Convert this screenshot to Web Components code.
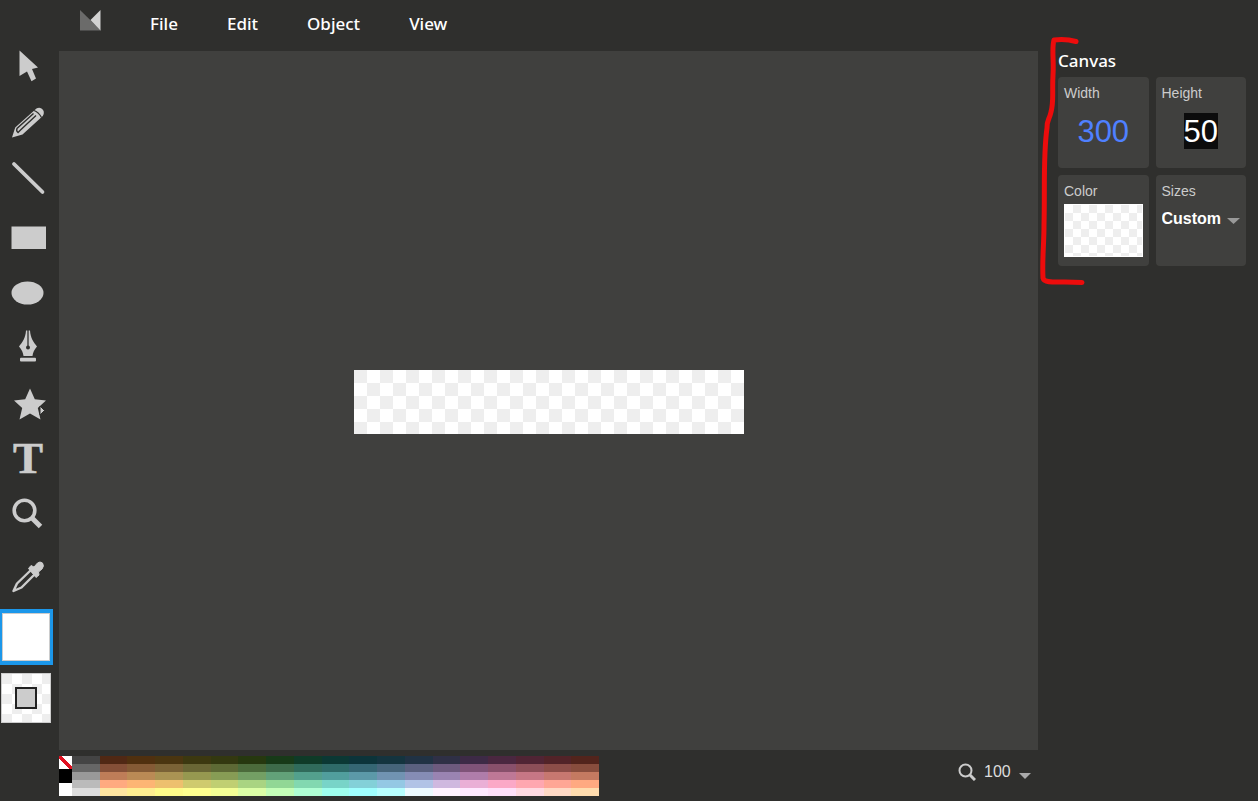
<!DOCTYPE html>
<html lang="en">
<head>
  <meta charset="UTF-8">
  <meta name="viewport" content="width=device-width, initial-scale=1.0">
  <title>Vector editor</title>
  <style>
    body {
      margin: 0;
      background: #2f2f2d;
      color: #fff;
      font-family: "Liberation Sans", Arial, sans-serif;
      font-size: 14px;
      --icon: #ccc;
      --surface: #40403e;
      --ui-font: "Noto Sans", sans-serif;
    }
  </style>
</head>
<body>
  <vector-editor>
    <menu-bar slot="menu"></menu-bar>
    <tool-bar slot="tools"></tool-bar>
    <art-stage slot="stage"></art-stage>
    <canvas-panel slot="panel"></canvas-panel>
    <color-palette slot="palette"></color-palette>
    <zoom-picker slot="zoom"></zoom-picker>
  </vector-editor>

<script type="text/javascript">
// Small helper: every element below fills an open shadow root with its markup.
class BaseElement extends HTMLElement {
  constructor() {
    super();
    this.attachShadow({mode: 'open'}).innerHTML = this.render();
  }
}

customElements.define('vector-editor', class extends BaseElement {
  render() {
    return `
      <style>
        :host {
          display: grid;
          grid-template-columns: 59px 1fr 220px;
          grid-template-rows: 51px 1fr 51px;
          min-height: 100vh;
        }
        .tools { grid-area: 1 / 1 / 4 / 2; }
        .menu { grid-area: 1 / 2 / 2 / 4; }
        .stage { grid-area: 2 / 2 / 3 / 3; display: grid; }
        .panel { grid-area: 2 / 3 / 4 / 4; }
        .footer {
          grid-area: 3 / 2 / 4 / 3;
          display: flex;
          justify-content: space-between;
          align-items: flex-start;
        }
      </style>
      <header class="menu"><slot name="menu"></slot></header>
      <aside class="tools"><slot name="tools"></slot></aside>
      <main class="stage"><slot name="stage"></slot></main>
      <aside class="panel"><slot name="panel"></slot></aside>
      <footer class="footer"><slot name="palette"></slot><slot name="zoom"></slot></footer>
    `;
  }
});

customElements.define('menu-bar', class extends BaseElement {
  render() {
    return `
      <style>
        :host { display: block; }
        nav {
          display: flex;
          align-items: flex-start;
          gap: 49px;
          padding: 10px 21px;
        }
        button {
          border: 0;
          padding: 0;
          background: none;
          color: #fff;
          font: 500 17px/28px var(--ui-font);
        }
      </style>
      <nav>
        <svg width="21" height="21" viewBox="0 0 21 21" aria-hidden="true">
          <path d="M0 0L21 20.5H0Z" fill="#6b6b6a"/>
          <path d="M20.5 0V20.5L10.5 10Z" fill="#d2d2d2"/>
        </svg>
        ${['File', 'Edit', 'Object', 'View'].map(name => `<button type="button">${name}</button>`).join('')}
      </nav>
    `;
  }
});

customElements.define('tool-button', class extends BaseElement {
  render() {
    return `
      <style>
        :host { display: block; }
        button {
          display: block;
          border: 0;
          padding: 0;
          background: none;
          color: var(--icon);
        }
      </style>
      <button type="button" aria-label="${this.getAttribute('label')}"><slot></slot></button>
    `;
  }
});

const TOOLS = {
  Select: '<path d="M19.5 12.5V38L27 33.5L31.5 43.2L36 40.6L32 31L38 29.5Z" fill="currentColor"/>',
  Pencil: `
    <path d="M12 43.5L15.2 33.5L34.5 16.3Q38 12.5 41.500 14.500Q45.500 17 42.800 22L22.500 40.500Z" fill="currentColor"/>
    <path d="M33.500 19.500L17 34.500Q16 37 18 38.500L20.500 36L36 21.500" fill="none" stroke="#2f2f2d" stroke-width="1.400"/>
    <path d="M34 16.500Q38.500 18 41.500 23.500" fill="none" stroke="#2f2f2d" stroke-width="1.200"/>`,
  Line: '<path d="M14 14L42.5 42" stroke="currentColor" stroke-width="3.8" stroke-linecap="round"/>',
  Rectangle: '<path d="M11.5 20.5H46V43H11.5Z" fill="currentColor"/>',
  Ellipse: '<ellipse cx="27.5" cy="31" rx="16" ry="11.5" fill="currentColor"/>',
  Pen: `
    <path d="M26 12.5H30C30.5 20 33.5 24 37 28.5C34 32 33 34.5 32.5 38H23.5C23 34.5 22 32 19 28.5C22.5 24 25.5 20 26 12.5Z" fill="currentColor"/>
    <path d="M28 12V28" stroke="#2f2f2d" stroke-width="1.3"/>
    <circle cx="28" cy="29.5" r="2" fill="#2f2f2d"/>
    <rect x="20" y="39.7" width="16" height="3.8" rx="1" fill="currentColor"/>`,
  Star: `
    <path d="M30 14.5L34.8 25.3L46 26.5L37.8 34L40.5 45.5L30 39.5L19.5 45.5L22.2 34L14 26.5L25.2 25.3Z" fill="currentColor"/>
    <path d="M40 32L44.5 36.5L40 41Z" fill="currentColor" stroke="#2f2f2d" stroke-width="1"/>`,
  Text: '<text x="28" y="43" text-anchor="middle" font-family="Liberation Serif, serif" font-weight="700" font-size="45" fill="currentColor" stroke="currentColor" stroke-width="0.6">T</text>',
  Zoom: `
    <circle cx="24.5" cy="24.5" r="10.3" fill="none" stroke="currentColor" stroke-width="3.6"/>
    <path d="M31.5 31.5L40.5 40.5" stroke="currentColor" stroke-width="5"/>`,
  Eyedropper: `
    <path d="M13.5 49L17 41.5L31 28L35 32L21.5 45.5Z" fill="none" stroke="currentColor" stroke-width="2.4" stroke-linejoin="round"/>
    <path d="M28.5 26.5L31 23.5L34 25L37.5 21Q40 19 42.5 21Q44.5 24 42 27L38.5 30L39 33L36 35.5Z" fill="currentColor" stroke="currentColor" stroke-width="1" stroke-linejoin="round"/>`
};

customElements.define('tool-bar', class extends BaseElement {
  render() {
    const tools = Object.entries(TOOLS).map(([label, shape]) => `
      <tool-button label="${label}"><svg width="56" height="56" viewBox="0 0 56 56" aria-hidden="true">${shape}</svg></tool-button>`);
    return `
      <style>
        :host { display: block; padding-top: 38px; }
        svg { display: block; }
        .swatches {
          display: flex;
          flex-direction: column;
          align-items: flex-start;
          gap: 8px;
          padding-top: 11px;
        }
        .swatches button { padding: 0; }
        .fill {
          width: 53px;
          height: 56px;
          border: solid #1c97ea;
          border-width: 4px 3px 4px 2px;
          background: #fff;
          box-shadow: inset 0 0 0 1px #ccc;
        }
        .outline {
          display: grid;
          place-items: center;
          width: 50px;
          height: 50px;
          margin-left: 1px;
          border: 1px solid #ccc;
          background: repeating-conic-gradient(#fff 0 25%, #eee 0 50%) 0 0 / 20px 20px;
        }
        .outline span {
          width: 18px;
          height: 18px;
          border: 2px solid #222;
          background: #ccc;
        }
      </style>
      ${tools.join('')}
      <div class="swatches">
        <button type="button" class="fill" aria-label="Fill color"></button>
        <button type="button" class="outline" aria-label="Stroke color"><span></span></button>
      </div>
    `;
  }
});

customElements.define('art-stage', class extends BaseElement {
  render() {
    return `
      <style>
        :host {
          display: grid;
          place-items: center;
          padding-top: 2px;
          background: var(--surface);
        }
        div {
          width: 390px;
          height: 64px;
          background: repeating-conic-gradient(#fff 0 25%, #eee 0 50%) 0 0 / 26px 26px;
        }
      </style>
      <div></div>
    `;
  }
});

// Card with a caption on top and any control in its slot
customElements.define('property-card', class extends BaseElement {
  render() {
    return `
      <style>
        :host {
          display: flex;
          flex-direction: column;
          box-sizing: border-box;
          height: 91px;
          padding: 6px;
          border-radius: 4px;
          background: var(--surface);
          color: #ccc;
        }
      </style>
      <slot></slot>
    `;
  }
});

customElements.define('canvas-panel', class extends BaseElement {
  render() {
    return `
      <style>
        :host { display: block; position: relative; padding: 0 12px 0 20px; }
        h2 { margin: 0; font: 500 17px/20px var(--ui-font); }
        .cards {
          display: grid;
          grid-template-columns: 1fr 1fr;
          gap: 7px;
          padding-top: 6px;
        }
        label { font-size: 14px; line-height: 20px; }
        input {
          align-self: center;
          width: 3ch;
          height: 36px;
          margin-top: 10px;
          border: 0;
          padding: 1px 0 0;
          box-sizing: border-box;
          background: none;
          color: #4f80ff;
          font: 31px "Liberation Sans", Arial, sans-serif;
        }
        input.selected {
          width: 2ch;
          background: #0c0c0c;
          color: #fff;
        }
        .color {
          height: 53px;
          margin-top: 3px;
          border: 1px solid #fff;
          padding: 0;
          background: repeating-conic-gradient(#eee 0 25%, #fff 0 50%) 0 0 / 16px 16px;
        }
        .sizes {
          display: flex;
          align-items: center;
          justify-content: space-between;
          padding-top: 8px;
        }
        .sizes svg { margin-top: 3px; }
        select {
          appearance: none;
          border: 0;
          padding: 0;
          background: none;
          color: #fff;
          font: 700 16px/20px "Liberation Sans", Arial, sans-serif;
        }
        .mark {
          position: absolute;
          top: -16px;
          left: 0;
          overflow: visible;
          pointer-events: none;
        }
      </style>
      <h2>Canvas</h2>
      <div class="cards">
        <property-card>
          <label for="width">Width</label>
          <input id="width" value="300" inputmode="numeric">
        </property-card>
        <property-card>
          <label for="height">Height</label>
          <input id="height" class="selected" value="50" inputmode="numeric">
        </property-card>
        <property-card>
          <label for="color">Color</label>
          <button id="color" class="color" type="button"></button>
        </property-card>
        <property-card>
          <label for="sizes">Sizes</label>
          <div class="sizes">
            <select id="sizes"><option>Custom</option></select>
            <svg width="13" height="7" viewBox="0 0 13 7" aria-hidden="true"><path d="M0 1H13L6.5 7Z" fill="#999"/></svg>
          </div>
        </property-card>
      </div>
      <svg class="mark" width="50" height="255" viewBox="0 0 50 255" aria-hidden="true">
        <path d="M38 6.5C31 4.5 24 4 16 5C13.5 13 16 25 15 40C14 58 16 66 13 77C11 86 9 84 9 93C5 121 7 151 6 190C6 210 4 225 5 243C6 248 17 247 27 247L44 247.5"
          fill="none" stroke="#ed0c0c" stroke-width="5" stroke-linecap="round" stroke-linejoin="round"/>
      </svg>
    `;
  }
});

// One row of the strip per shade, from dark to light
const SHADES = [
  ['#444', '#502814', '#50300f', '#4a3510', '#3c3810', '#333810', '#26380f', '#173a18', '#0f3b28', '#0b3834', '#0c343a', '#14343f', '#203244', '#2f3046', '#3d2a46', '#4a2740', '#502434', '#522328', '#52241c'],
  ['#666', '#844f37', '#845a35', '#7a6236', '#696635', '#5d6935', '#4b6b3b', '#3d6b4a', '#306b5b', '#2e6a68', '#356673', '#46647a', '#5a607f', '#6d5a7e', '#7f5378', '#88506b', '#8c4e58', '#8c4d48', '#884d3d'],
  ['#999', '#be7d58', '#ba8a55', '#aa9353', '#969850', '#879c55', '#739f64', '#62a179', '#53a08d', '#519e9d', '#5c99a8', '#7193b2', '#858cb5', '#9a84b2', '#af7daa', '#be7896', '#c67785', '#c77870', '#c47a61'],
  ['#bbb', '#ffaa80', '#fdb574', '#edc06e', '#cfca6e', '#c0cf72', '#a9d482', '#91d795', '#82d8b0', '#78d4c8', '#83d0d8', '#94c8e4', '#b1c3e6', '#cfb8df', '#eaafd6', '#fba8c7', '#ffa7b0', '#ffa695', '#ffa981'],
  ['#ddd', '#ffe5a0', '#ffee91', '#fffb8a', '#ffff90', '#f4ff96', '#dcffa7', '#c4ffb8', '#b0ffd4', '#9fffee', '#a0ffff', '#b8ffff', '#edfaff', '#fff3ff', '#ffe9ff', '#ffe0fa', '#ffdae2', '#ffd9c5', '#ffdcae']
];

customElements.define('color-palette', class extends BaseElement {
  render() {
    const swatches = SHADES.flat().map(color => `<button type="button" aria-label="${color}" style="background: ${color}"></button>`);
    return `
      <style>
        :host {
          display: flex;
          flex: 0 1 540px;
          height: 40px;
          padding-top: 6px;
        }
        button { display: block; border: 0; padding: 0; }
        .basic {
          display: grid;
          grid-template-rows: repeat(3, 1fr);
          width: 13px;
        }
        .none { background: linear-gradient(45deg, #fff 42%, #e01020 42% 58%, #fff 58%); }
        .black { background: #000; }
        .white { background: #fff; }
        .shades {
          flex: 1;
          display: grid;
          grid-template-columns: repeat(19, 1fr);
          grid-template-rows: repeat(5, 8px);
        }
      </style>
      <div class="basic">
        <button type="button" class="none" aria-label="No color"></button>
        <button type="button" class="black" aria-label="Black"></button>
        <button type="button" class="white" aria-label="White"></button>
      </div>
      <div class="shades">${swatches.join('')}</div>
    `;
  }
});

customElements.define('zoom-picker', class extends BaseElement {
  render() {
    return `
      <style>
        :host { display: block; padding: 12px 7px 0 0; }
        label { display: flex; align-items: center; gap: 8px; }
        select {
          appearance: none;
          border: 0;
          padding: 0;
          background: none;
          color: #ddd;
          font: 16px/20px "Liberation Sans", Arial, sans-serif;
        }
        .caret { margin-top: 6px; }
      </style>
      <label>
        <svg width="18" height="18" viewBox="0 0 18 18" role="img" aria-label="Zoom">
          <circle cx="7.5" cy="7.5" r="6" fill="none" stroke="#ccc" stroke-width="2"/>
          <path d="M12 12L17 17" stroke="#ccc" stroke-width="3"/>
        </svg>
        <select><option>100</option></select>
        <svg class="caret" width="12" height="7" viewBox="0 0 12 7" aria-hidden="true"><path d="M0 1H12L6 7Z" fill="#aaa"/></svg>
      </label>
    `;
  }
});
</script>
</body>
</html>
